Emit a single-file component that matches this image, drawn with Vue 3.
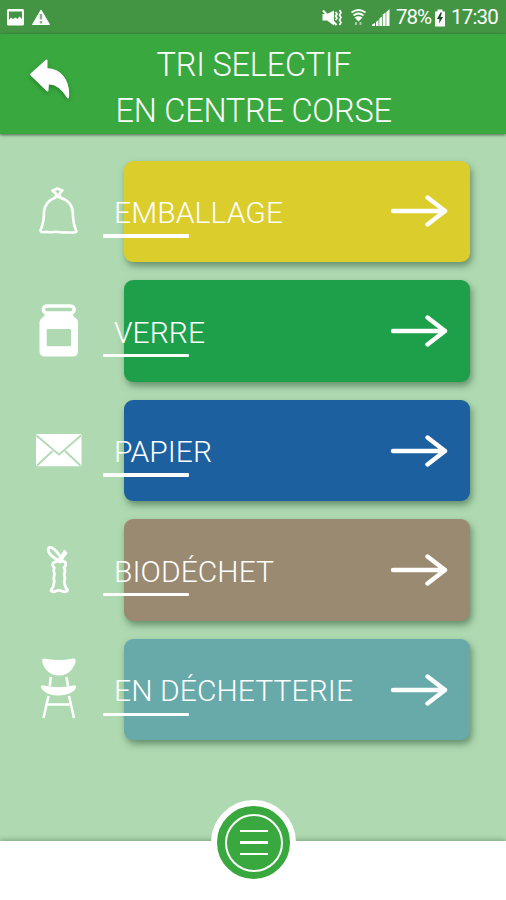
<script setup>
import { ref } from 'vue';

const categories = ref([
  { id: 'emballage', label: 'EMBALLAGE', color: '#dbcd2c', width: 169 },
  { id: 'verre', label: 'VERRE', color: '#1ea04b', width: 91 },
  { id: 'papier', label: 'PAPIER', color: '#1c609f', width: 98 },
  { id: 'biodechet', label: 'BIODÉCHET', color: '#9a8a71', width: 160 },
  { id: 'dechetterie', label: 'EN DÉCHETTERIE', color: '#67aaa9', width: 239 }
]);
</script>

<template>
  <div class="screen">
    <div class="status">
      <svg class="status-left" viewBox="0 0 60 34">
        <path fill="#fff" fill-rule="evenodd" d="M8.500 9h14q1.500 0 1.500 1.500v13.500q0 1.500-1.500 1.500h-14q-1.500 0-1.500-1.500v-13.500q0-1.500 1.500-1.500zM9 11.500v8.500l2-2.500 2 1.500 2.500-1.500 2 1.500 2-2.500 2.500 2.500v-7.500z" />
        <path fill="#fff" stroke="#fff" stroke-linejoin="round" d="M41 10l8.500 14.500h-17z" />
        <path stroke="#8fae8f" stroke-width="2.500" d="M41 14v5.500M41 21v2.500" />
      </svg>
      <div class="status-right">
        <svg class="status-icons" viewBox="320 0 74 34">
          <path fill="#fff" d="M322.500 14h4.500l7-3.500v15l-7-5h-4.500z" />
          <path stroke="#fff" stroke-width="2" d="M323 10.500l13.500 14.500" fill="none" />
          <path fill="none" stroke="#fff" stroke-width="1.700" d="M335.500 12l1.500 2-1.500 2 1.500 2-1.500 2M339.500 10l1.500 2.500-1.500 2.500 1.500 2.500-1.500 2.500 1.500 2.500-1.500 2.500" />
          <path fill="none" stroke="#fff" stroke-width="1.800" d="M351.500 12.500q7-5 14 0M353.500 15.500q5-4 10 0" />
          <path fill="#fff" d="M354.500 17.500q4-2.500 8 0l-4 4z" />
          <path stroke="#a9cda9" stroke-width="2" d="M356 22v3M360.500 22v3" />
          <path fill="#fff" d="M372 26v-1.500l3-1.500v3zM376 26v-4l2.500-2v6zM379.300 26v-7.500l2.700-2v9.500zM382.700 26v-11.500l2.900-2v13.500zM386.300 26v-14l3.200-3v17z" />
        </svg>
        <span class="percent">78%</span>
        <svg class="battery" viewBox="0 0 12 34">
          <path fill="#fff" d="M3.500 9.500h5v2h2.500v15h-10v-15h2.500z" />
          <path fill="#174c20" d="M6.500 12.500l-3.500 6.500h2.500l-.5 4.500 4-6.500h-2.500l1.500-4.500z" />
        </svg>
        <span class="clock">17:30</span>
      </div>
    </div>

    <header class="header">
      <button class="back">
        <svg viewBox="0 0 50 50">
          <path fill="#fff" stroke="#fff" stroke-width="2" stroke-linejoin="round" d="M6 17.500L21.500 3.500v8.500C36 12.500 44.500 24 43 40.500 37.500 31.500 31.500 26.500 24 26.500L23 26.500 22.500 33.500z" />
        </svg>
      </button>
      <h1 class="title">
        <svg class="lines" viewBox="0 0 506 100">
          <text x="156.500" y="41.800" textLength="195">TRI SELECTIF</text>
          <text x="115.500" y="87.800" textLength="276.500">EN CENTRE CORSE</text>
        </svg>
      </h1>
    </header>

    <main class="list">
      <div v-for="item in categories" :key="item.id" class="row">
        <svg class="icon" viewBox="30 0 60 102">
          <!-- sac -->
          <g v-if="item.id === 'emballage'" class="outline">
            <path d="M55.500 36.500C47.500 39.500 44.500 44 44 51c0 8-1 13-3.500 18q0 2.500 3 2.200c3-1 5 .3 8 0 4-1 7-.2 11 .3 4-.6 8 .6 13-.2 1.500-.6.800-2 .200-3-2.500-5-2.500-10-3-17.500-.5-7.500-5-12-13.200-14.300" />
            <path d="M55.500 36l1-2.800-4-3.700 2.500-.8 2.500-1.200 2.500 1.200 2.500.500-3.300 3.800 1 3-2.500-.5z" />
          </g>
          <!-- bocal -->
          <g v-else-if="item.id === 'verre'">
            <rect class="outline lid" x="43.300" y="26" width="30.900" height="7" rx="3.500" />
            <path fill="#fff" fill-rule="evenodd" d="M45 34h27.500q.5 2 2.500 3.500 3 2 3 5v28.500q0 5.500-5.500 5.500h-27.500q-5.500 0-5.500-5.500v-28.500q0-3 3-5 2-1.500 2.500-3.500zM48 49q-1.300 0-1.300 1.300v14.700q0 1.300 1.300 1.300h21.700q1.300 0 1.300-1.300v-14.700q0-1.300-1.300-1.300z" />
          </g>
          <!-- enveloppe -->
          <g v-else-if="item.id === 'papier'">
            <rect x="36" y="34" width="45.500" height="32.300" rx="1.500" fill="#fff" />
            <path class="fold" d="M36.500 35.500L59 54.600 81 35.500M37 65.500l15.500-14.500M80.500 65.500l-15.500-14.500" />
          </g>
          <!-- trognon -->
          <g v-else-if="item.id === 'biodechet'" class="outline thick">
            <path d="M54 43.500c-2.200 1.500-2 3 .3 5-1 2.500-.8 4 .3 6.500-1 2.500-1 5-.3 7.500-.3 3.500-1.300 6.500-3.300 9 1 1.500 3.500 1.300 5.200.5 2-.8 4-.7 6 .2 2.200.8 4.500.5 5.500-.9-2.500-2.600-3.200-5.300-3.400-8.800.9-2.500.8-5-.2-7.500 1.300-2.500 1.500-4-.2-6.500 2.200-1.700 2.400-3.500 1.200-5" />
            <path d="M54 43.500l3.500-1.800 2.500 1.300 2.500-1.300 3 1.800M57.500 40.500c-4-1.500-6.500-3.700-8.500-7-1.500-2.700-1-5.500 1.500-5.200 4.200.7 6.500 4.700 9.500 8.700M57.500 40.500l3-.5 4-7.500M66 34l-5 7" />
          </g>
          <!-- chaise -->
          <g v-else>
            <path fill="#fff" d="M42.500 20q1-.8 3-.3 13.500 2.500 26.500 0 2.500-.5 3.500.8c1 2-1 7-5 11.300Q66 36.500 59 36.500 52 36.500 47.500 32c-4-4-6-9-5-12zM41 46.800q1-.8 3-.2 14 3.300 29 0 2.500-.7 3 .5c.5 4-4 6-6.500 7.500Q59 58.500 48 54.700c-3-1.500-7.500-4-7-7.900z" />
            <path class="legs" d="M50.800 38l-1 9M66.500 38l1.500 9M48.500 57L43.500 79M69 57l5 22M47.500 65.500h22" />
          </g>
        </svg>
        <div class="card" :style="{ background: item.color }">
          <svg class="arrow" viewBox="0 0 58 34">
            <path d="M3 17h52M37.500 3.500L55 17 37.500 30.500" />
          </svg>
          <div class="caption">
            <svg class="label" viewBox="0 0 250 38"><text x="0" y="30.200" :textLength="item.width">{{ item.label }}</text></svg>
            <span class="underline"></span>
          </div>
        </div>
      </div>
    </main>

    <footer class="footer">
      <button class="menu">
        <span class="ring">
          <i></i>
          <i></i>
          <i></i>
        </span>
      </button>
    </footer>
  </div>
</template>

<style>
body {
  margin: 0;
}
</style>

<style scoped>
.screen {
  width: 506px;
  height: 900px;
  display: flex;
  flex-direction: column;
  overflow: hidden;
  background: #afdab1;
  font-family: Roboto, "Noto Sans", sans-serif;
  color: #fff;
}
button {
  border: none;
  padding: 0;
  cursor: pointer;
}
.status {
  height: 34px;
  flex: none;
  display: flex;
  justify-content: space-between;
  background: #439544;
}
.status-left {
  width: 60px;
  height: 34px;
}
.status-right {
  display: flex;
  align-items: center;
  padding-right: 8px;
  font-size: 20.5px;
  line-height: 38px;
}
.status-icons {
  width: 74px;
  height: 34px;
}
.percent {
  width: 37px;
  margin-left: 2px;
  letter-spacing: -1px;
}
.battery {
  width: 12px;
  height: 34px;
  margin-left: 1px;
}
.clock {
  width: 47px;
  margin-left: 5px;
  letter-spacing: -0.8px;
}
.header {
  height: 100px;
  flex: none;
  position: relative;
  background: #39a83f;
  box-shadow: 0 1px 3px rgba(0, 0, 0, 0.55);
}
.back {
  position: absolute;
  left: 25px;
  top: 22.5px;
  width: 50px;
  height: 50px;
  background: none;
}
.back svg {
  width: 50px;
  height: 50px;
  filter: drop-shadow(0 2px 2px rgba(0, 60, 0, 0.35));
}
.title {
  margin: 0;
  font-size: 32.5px;
  font-weight: 300;
}
.lines {
  display: block;
  width: 506px;
  height: 100px;
}
text {
  fill: #fff;
}
.list {
  flex: 1;
  display: flex;
  flex-direction: column;
  gap: 18.1px;
  padding: 26.6px 36px 0 30px;
}
.row {
  height: 101.5px;
  display: flex;
  gap: 34px;
}
.icon {
  width: 60px;
  height: 102px;
  flex: none;
}
.outline {
  fill: none;
  stroke: #fff;
  stroke-width: 2.6;
  stroke-linejoin: round;
  stroke-linecap: round;
}
.lid {
  stroke-width: 3.4;
}
.thick {
  stroke-width: 2.8;
}
.fold {
  fill: none;
  stroke: #afdab1;
  stroke-width: 1.8;
}
.legs {
  fill: none;
  stroke: #fff;
  stroke-width: 2.5;
}
.card {
  flex: 1;
  position: relative;
  display: flex;
  align-items: center;
  justify-content: flex-end;
  padding-right: 22px;
  border-radius: 9px;
  box-shadow: 2px 4px 7px rgba(30, 70, 40, 0.5);
}
.arrow {
  width: 58px;
  height: 34px;
  fill: none;
  stroke: #fff;
  stroke-width: 4.4;
  stroke-linecap: round;
  stroke-linejoin: round;
}
.caption {
  position: absolute;
  left: -21px;
  top: 32.5px;
}
.label {
  display: block;
  width: 250px;
  height: 38px;
  margin-left: 11px;
  font-size: 30px;
  font-weight: 300;
}
.underline {
  display: block;
  width: 86px;
  height: 3.4px;
  margin-top: 3.2px;
  border-radius: 1px;
  background: #fff;
}
.footer {
  height: 59px;
  flex: none;
  position: relative;
  background: #fff;
  box-shadow: 0 -1px 5px rgba(30, 80, 30, 0.4);
}
.menu {
  position: absolute;
  left: 211px;
  top: -41px;
  width: 85px;
  height: 85px;
  display: flex;
  align-items: center;
  justify-content: center;
  border: 6px solid #fff;
  border-radius: 50%;
  background: #39a83f;
}
.ring {
  width: 54px;
  height: 54px;
  display: flex;
  flex-direction: column;
  align-items: center;
  justify-content: center;
  gap: 9px;
  border: 2px solid #fff;
  border-radius: 50%;
}
.ring i {
  width: 28px;
  height: 2.4px;
  background: #fff;
}
</style>
